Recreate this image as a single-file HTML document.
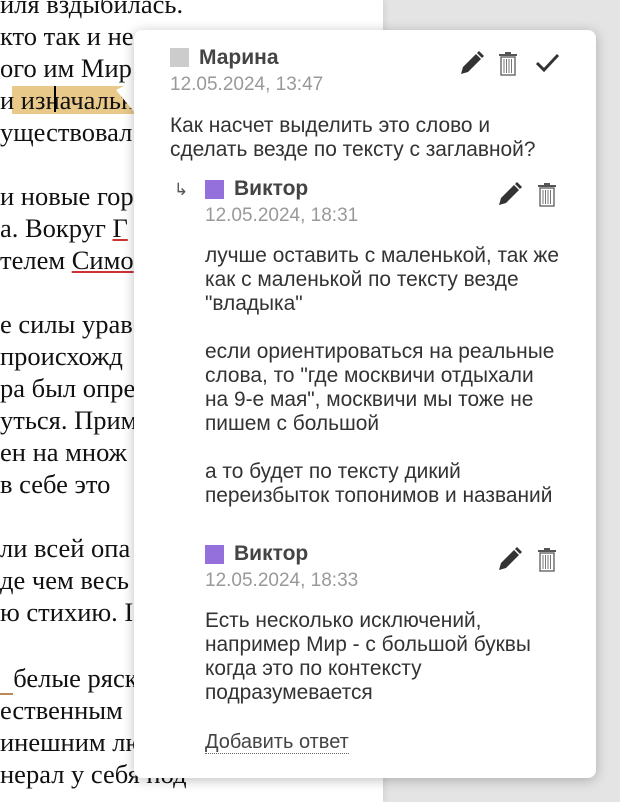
<!DOCTYPE html>
<html><head><meta charset="utf-8"><style>
*{margin:0;padding:0;box-sizing:border-box}
body{width:620px;height:802px;overflow:hidden;background:#e4e4e4;position:relative;font-family:"Liberation Sans",sans-serif}
.page{position:absolute;left:0;top:0;width:383px;height:802px;background:#fff;overflow:hidden;box-shadow:2px 0 6px rgba(0,0,0,.08)}
.ln{position:absolute;left:0;white-space:nowrap;font-family:"Liberation Serif",serif;font-size:26.5px;color:#111;line-height:32px}
.pop{position:absolute;left:134px;top:30px;width:462px;height:748px;background:#fff;border-radius:8px;box-shadow:0 2px 12px rgba(0,0,0,.25)}
.t{position:absolute;white-space:nowrap;color:#333;font-size:20.9px;line-height:24px}
.nm{font-weight:bold;font-size:21px;color:#444}
.dt{color:#999;font-size:19px}
.sq{position:absolute;width:19px;height:19px}
svg{position:absolute}
</style></head><body>
<div class="page">
<div class="ln" style="top:-12px">иля вздыбилась.</div>
<div class="ln" style="top:20px">кто так и не</div>
<div class="ln" style="top:52px">ого им Мир</div>
<div style="position:absolute;left:12px;top:86px;width:125px;height:28px;background:#e9c98a"></div>
<div class="ln" style="top:84px">и изначальн</div>
<div style="position:absolute;left:54px;top:86px;width:2px;height:26px;background:#000"></div>
<div class="ln" style="top:116px">уществовал</div>
<div class="ln" style="top:180px">и новые гор</div>
<div class="ln" style="top:212px">а. Вокруг <span style="text-decoration:underline;text-decoration-color:#c33">Г</span></div>
<div class="ln" style="top:244px">телем <span style="text-decoration:underline;text-decoration-color:#c33">Симо</span></div>
<div class="ln" style="top:308px">е силы урав</div>
<div class="ln" style="top:340px"> происхожд</div>
<div class="ln" style="top:372px">ра был опре</div>
<div class="ln" style="top:404px">уться. Прим</div>
<div class="ln" style="top:436px">ен на множ</div>
<div class="ln" style="top:468px">в себе это</div>
<div class="ln" style="top:532px">ли всей опа</div>
<div class="ln" style="top:564px">де чем весь</div>
<div class="ln" style="top:596px">ю стихию. I</div>
<div class="ln" style="top:662px"><span style="border-bottom:2px solid #b85">&nbsp;&nbsp;</span>белые ряск</div>
<div class="ln" style="top:694px">ественным </div>
<div class="ln" style="top:726px">инешним лю</div>
<div class="ln" style="top:758px">нерал у себя под</div>
</div>
<svg style="left:116px;top:80px" width="20" height="40"><polygon points="20,0 20,34 0,10" fill="#fff"/></svg>
<div class="pop"></div>

<div class="sq" style="left:170px;top:48px;background:#ccc"></div>
<div class="t nm" style="left:199px;top:46px">Марина</div>
<div class="t dt" style="left:170px;top:73px">12.05.2024, 13:47</div>
<div class="t" style="left:170px;top:114px">Как насчет выделить это слово и</div>
<div class="t" style="left:170px;top:138px">сделать везде по тексту с заглавной?</div>

<div class="t" style="left:174px;top:178px;font-size:17px;color:#555">↳</div>
<div class="sq" style="left:205px;top:180px;background:#9370db"></div>
<div class="t nm" style="left:234px;top:177px">Виктор</div>
<div class="t dt" style="left:205px;top:204px">12.05.2024, 18:31</div>
<div class="t" style="left:205px;top:244px">лучше оставить с маленькой, так же</div>
<div class="t" style="left:205px;top:268px">как с маленькой по тексту везде</div>
<div class="t" style="left:205px;top:292px">"владыка"</div>
<div class="t" style="left:205px;top:340px">если ориентироваться на реальные</div>
<div class="t" style="left:205px;top:364px">слова, то "где москвичи отдыхали</div>
<div class="t" style="left:205px;top:388px">на 9-е мая", москвичи мы тоже не</div>
<div class="t" style="left:205px;top:412px">пишем с большой</div>
<div class="t" style="left:205px;top:460px">а то будет по тексту дикий</div>
<div class="t" style="left:205px;top:484px">переизбыток топонимов и названий</div>

<div class="sq" style="left:205px;top:545px;background:#9370db"></div>
<div class="t nm" style="left:234px;top:542px">Виктор</div>
<div class="t dt" style="left:205px;top:569px">12.05.2024, 18:33</div>
<div class="t" style="left:205px;top:609px">Есть несколько исключений,</div>
<div class="t" style="left:205px;top:633px">например Мир - с большой буквы</div>
<div class="t" style="left:205px;top:657px">когда это по контексту</div>
<div class="t" style="left:205px;top:681px">подразумевается</div>
<div class="t" style="left:205px;top:731px;color:#444;border-bottom:1px dotted #666;line-height:22px;font-size:20px">Добавить ответ</div>

<svg width="0" height="0"><defs>
<g id="pen"><path d="M2 24 L4 17 L17 4 L22 9 L9 22 Z" fill="#333"/><path d="M18 3 L20 1 L25 6 L23 8 Z" fill="#333"/></g>
<g id="tr"><rect x="1" y="3" width="18" height="2" fill="#555"/><rect x="7" y="1" width="6" height="2" fill="#555"/><rect x="3" y="6" width="14" height="18" fill="none" stroke="#666" stroke-width="1.4"/><path d="M6 8v14M8.5 8v14M11 8v14M13.5 8v14" stroke="#777" stroke-width="1"/></g>
</defs></svg>
<svg style="left:459px;top:50px" width="26" height="26"><use href="#pen"/></svg>
<svg style="left:498px;top:51px" width="20" height="26"><use href="#tr"/></svg>
<svg style="left:535px;top:52px" width="26" height="22"><path d="M2 11 L9 18 L23 3" fill="none" stroke="#333" stroke-width="3"/></svg>
<svg style="left:497px;top:181px" width="26" height="26"><use href="#pen"/></svg>
<svg style="left:537px;top:182px" width="20" height="26"><use href="#tr"/></svg>
<svg style="left:497px;top:546px" width="26" height="26"><use href="#pen"/></svg>
<svg style="left:537px;top:547px" width="20" height="26"><use href="#tr"/></svg>
</body></html>
